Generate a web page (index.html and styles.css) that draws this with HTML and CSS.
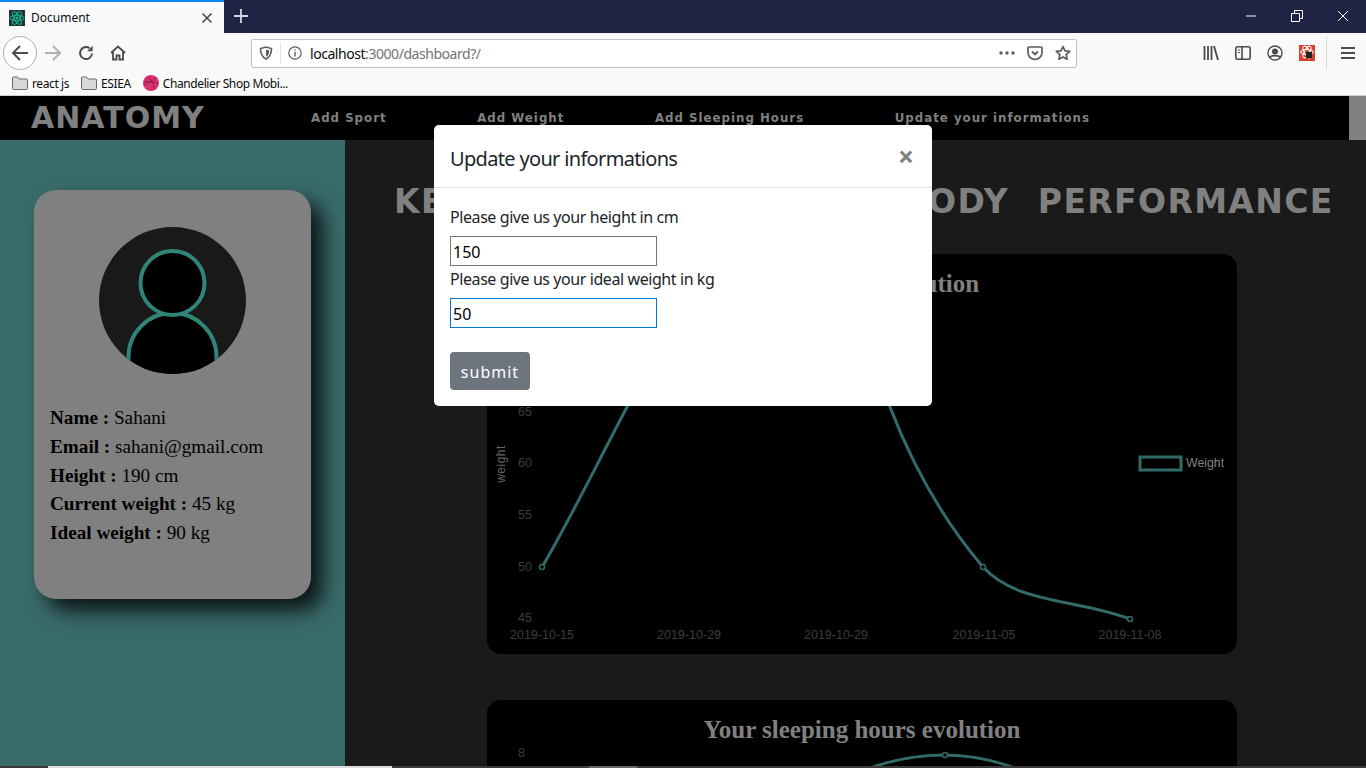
FILE: index.html
```html
<!DOCTYPE html>
<html lang="en">
<head>
  <meta charset="UTF-8">
  <meta name="viewport" content="width=device-width, initial-scale=1.0">
  <title>Document</title>
  <link rel="stylesheet" href="styles.css">
</head>
<body>
  <!-- browser window chrome -->
  <div class="tabbar">
    <div class="tab">
      <svg class="favicon" width="16" height="16" viewBox="0 0 16 16">
        <rect width="16" height="16" fill="#20333a"/>
        <g fill="none" stroke="#1fb58f" stroke-width="1">
          <ellipse cx="8" cy="8" rx="7" ry="2.8"/>
          <ellipse cx="8" cy="8" rx="7" ry="2.8" transform="rotate(60 8 8)"/>
          <ellipse cx="8" cy="8" rx="7" ry="2.8" transform="rotate(120 8 8)"/>
        </g>
        <circle cx="8" cy="8" r="1.6" fill="#1fb58f"/>
      </svg>
      <span class="tab-title">Document</span>
      <svg class="tab-close" width="12" height="12" viewBox="0 0 12 12">
        <path d="M1.5 1.5l9 9M10.5 1.5l-9 9" stroke="#4a4a4f" stroke-width="1.6"/>
      </svg>
    </div>
    <svg class="newtab" width="14" height="14" viewBox="0 0 14 14">
      <path d="M7 0v14M0 7h14" stroke="#d7d8e0" stroke-width="1.8"/>
    </svg>
    <div class="window-controls">
      <svg width="12" height="12" viewBox="0 0 12 12"><path d="M1 6h10" stroke="#fff" stroke-width="1"/></svg>
      <svg width="12" height="12" viewBox="0 0 12 12"><path d="M.5 3.5h8v8h-8zM3.5 3.5v-3h8v8h-3" fill="none" stroke="#fff" stroke-width="1"/></svg>
      <svg width="12" height="12" viewBox="0 0 12 12"><path d="M1 1l10 10M11 1L1 11" stroke="#fff" stroke-width="1"/></svg>
    </div>
  </div>

  <div class="toolbar">
    <div class="nav-buttons">
      <span class="back-btn">
        <svg width="18" height="16" viewBox="0 0 18 16"><path d="M9 1L2 8l7 7M2 8h15" fill="none" stroke="#4a4a4f" stroke-width="2"/></svg>
      </span>
      <svg width="18" height="16" viewBox="0 0 18 16"><path d="M9 1l7 7-7 7M16 8H1" fill="none" stroke="#b1b1b3" stroke-width="2"/></svg>
      <svg width="16" height="16" viewBox="0 0 16 16"><path d="M14 8.500A6 6 0 1 1 11.500 3.200" fill="none" stroke="#4a4a4f" stroke-width="2"/><path d="M14.600 .8v5.400H9.200z" fill="#4a4a4f"/></svg>
      <svg width="16" height="16" viewBox="0 0 16 16"><path d="M1 8l7-6.500L15 8M3 7v7.500h3.500v-4h3v4H13V7" fill="none" stroke="#4a4a4f" stroke-width="1.800"/></svg>
    </div>
    <div class="urlbar">
      <svg class="url-shield" width="14" height="14" viewBox="0 0 14 14"><path d="M7 1l5.500 1.500c0 5-1.500 8.500-5.500 10.500C3 11 1.500 7.500 1.500 2.500z" fill="none" stroke="#5b5b60" stroke-width="1.600"/><path d="M7 3.500l3.200 .9c0 3-.9 5-3.200 6.300z" fill="#5b5b60"/></svg>
      <span class="url-sep"></span>
      <svg class="url-info" width="14" height="14" viewBox="0 0 14 14"><circle cx="7" cy="7" r="6.200" fill="none" stroke="#5b5b60" stroke-width="1.200"/><path d="M7 6v4.500M7 3.500v1.300" stroke="#5b5b60" stroke-width="1.400"/></svg>
      <span class="url-text">localhost<span class="url-muted">:3000/dashboard?/</span></span>
      <div class="url-actions">
        <svg width="16" height="4" viewBox="0 0 16 4"><g fill="#5b5b60"><circle cx="2" cy="2" r="1.700"/><circle cx="8" cy="2" r="1.700"/><circle cx="14" cy="2" r="1.700"/></g></svg>
        <svg width="16" height="15" viewBox="0 0 16 15"><path d="M2 1h12a1 1 0 0 1 1 1v4.500a7 7 0 0 1-14 0V2a1 1 0 0 1 1-1z" fill="none" stroke="#5b5b60" stroke-width="1.700"/><path d="M5 5.500L8 8.500l3-3" fill="none" stroke="#5b5b60" stroke-width="1.900"/></svg>
        <svg width="16" height="16" viewBox="0 0 16 16"><path d="M8 1.500l2 4.300 4.700 .6-3.500 3.200 .9 4.700L8 12l-4.100 2.300 .9-4.700L1.300 6.400 6 5.800z" fill="none" stroke="#5b5b60" stroke-width="1.700" stroke-linejoin="round"/></svg>
      </div>
    </div>
    <div class="tool-icons">
      <svg width="16" height="16" viewBox="0 0 16 16"><path d="M1.500 1v14M5 1v14M8.500 1v14M11 1l4 14" stroke="#4a4a4f" stroke-width="1.800"/></svg>
      <svg width="16" height="14" viewBox="0 0 16 14"><rect x=".8" y=".8" width="14.400" height="12.400" rx="2" fill="none" stroke="#4a4a4f" stroke-width="1.600"/><path d="M7 1v12" stroke="#4a4a4f" stroke-width="1.600"/><path d="M3 4h2M3 6.500h2" stroke="#4a4a4f" stroke-width="1.200"/></svg>
      <svg width="16" height="16" viewBox="0 0 16 16"><circle cx="8" cy="8" r="7" fill="none" stroke="#4a4a4f" stroke-width="1.400"/><circle cx="8" cy="6.500" r="3" fill="#4a4a4f"/><path d="M3 12.500c1-2.500 9-2.500 10 0" fill="none" stroke="#4a4a4f" stroke-width="1.600"/></svg>
      <svg width="16" height="16" viewBox="0 0 16 16">
        <rect width="16" height="16" fill="#d8412f"/>
        <g fill="none" stroke="#fff" stroke-width="1">
          <ellipse cx="8" cy="7" rx="6.500" ry="2.600"/>
          <ellipse cx="8" cy="7" rx="6.500" ry="2.600" transform="rotate(60 8 7)"/>
          <ellipse cx="8" cy="7" rx="6.500" ry="2.600" transform="rotate(120 8 7)"/>
        </g>
        <rect x="7" y="7" width="6" height="6" fill="#222"/>
      </svg>
      <span class="tool-sep"></span>
      <svg width="14" height="12" viewBox="0 0 14 12"><path d="M0 1h14M0 6h14M0 11h14" stroke="#4a4a4f" stroke-width="2"/></svg>
    </div>
  </div>

  <div class="bookmarks">
    <span class="bookmark">
      <svg width="16" height="14" viewBox="0 0 16 14"><path d="M.5 12.500V2a1 1 0 0 1 1-1h4l1.500 2h7.500a1 1 0 0 1 1 1v8.500a1 1 0 0 1-1 1h-13a1 1 0 0 1-1-1z" fill="#d8d8d8" stroke="#6a6a6a"/></svg>
      react js
    </span>
    <span class="bookmark">
      <svg width="16" height="14" viewBox="0 0 16 14"><path d="M.5 12.500V2a1 1 0 0 1 1-1h4l1.500 2h7.500a1 1 0 0 1 1 1v8.500a1 1 0 0 1-1 1h-13a1 1 0 0 1-1-1z" fill="#d8d8d8" stroke="#6a6a6a"/></svg>
      ESIEA
    </span>
    <span class="bookmark">
      <svg width="16" height="16" viewBox="0 0 16 16"><circle cx="8" cy="8" r="8" fill="#d9326f"/><path d="M5 1.500c3 3 6 7.500 6.500 13M1 6.500c5 .5 9-.5 12.500-4M.8 10c4-3.500 9-3.500 14.500-1.500" fill="none" stroke="#8f1a47" stroke-width=".9"/></svg>
      Chandelier Shop Mobi...
    </span>
  </div>

  <!-- page -->
  <div class="page">
    <nav class="topnav">
      <span class="logo">ANATOMY</span>
      <div class="topnav-links">
        <a>Add Sport</a>
        <a>Add Weight</a>
        <a>Add Sleeping Hours</a>
        <a>Update your informations</a>
      </div>
      <span class="scroll-thumb"></span>
    </nav>

    <div class="content">
      <aside class="sidebar">
        <div class="profile-card">
          <svg class="avatar" width="147" height="147" viewBox="0 0 147 147">
            <defs><clipPath id="avatarClip"><circle cx="73.500" cy="73.500" r="73.500"/></clipPath></defs>
            <g clip-path="url(#avatarClip)">
              <rect width="147" height="147" fill="#191919"/>
              <circle cx="73.500" cy="130" r="44" fill="#000" stroke="#2f8577" stroke-width="4"/>
              <circle cx="73.500" cy="56" r="32" fill="#000" stroke="#2f8577" stroke-width="4"/>
            </g>
          </svg>
          <div class="profile-info">
            <p><b>Name :</b> Sahani</p>
            <p><b>Email :</b> sahani@gmail.com</p>
            <p><b>Height :</b> 190 cm</p>
            <p><b>Current weight :</b> 45 kg</p>
            <p><b>Ideal weight :</b> 90 kg</p>
          </div>
        </div>
      </aside>

      <main class="main">
        <h1 class="main-title">KEEP TRACK OF YOUR BODY PERFORMANCE</h1>

        <div class="chart-card">
          <svg width="750" height="400" viewBox="0 0 750 400">
            <text class="chart-title" x="375" y="38">Your weight evolution</text>
            <text class="tick" x="45" y="162" text-anchor="end">65</text>
            <text class="tick" x="45" y="213" text-anchor="end">60</text>
            <text class="tick" x="45" y="265" text-anchor="end">55</text>
            <text class="tick" x="45" y="317" text-anchor="end">50</text>
            <text class="tick" x="45" y="368" text-anchor="end">45</text>
            <text class="tick" x="55" y="385" text-anchor="middle">2019-10-15</text>
            <text class="tick" x="202" y="385" text-anchor="middle">2019-10-29</text>
            <text class="tick" x="349" y="385" text-anchor="middle">2019-10-29</text>
            <text class="tick" x="497" y="385" text-anchor="middle">2019-11-05</text>
            <text class="tick" x="643" y="385" text-anchor="middle">2019-11-08</text>
            <text class="axis-label" transform="translate(18 210) rotate(-90)" text-anchor="middle">weight</text>
            <path class="line" d="M55 313C78 275 110 210 140 153C170 95 190 60 210 60L340 60C365 60 385 105 403 153C425 210 455 265 496 313C530 350 590 345 643 365"/>
            <circle class="point" cx="55" cy="313" r="2.500"/>
            <circle class="point" cx="496" cy="313" r="2.500"/>
            <circle class="point" cx="643" cy="365" r="2.500"/>
            <rect class="legend-box" x="653" y="203" width="41" height="13"/>
            <text class="legend-text" x="699" y="213">Weight</text>
          </svg>
        </div>

        <div class="chart-card">
          <svg width="750" height="100" viewBox="0 0 750 100">
            <text class="chart-title" x="375" y="38">Your sleeping hours evolution</text>
            <text class="tick" x="38" y="57" text-anchor="end">8</text>
            <path class="line" d="M372 72Q458 38 538 72"/>
            <circle class="point" cx="458" cy="55" r="2.500"/>
          </svg>
        </div>
      </main>
    </div>

    <div class="hscroll">
      <span class="hscroll-light"></span>
      <span class="hscroll-thumb"></span>
    </div>
  </div>

  <!-- modal -->
  <div class="modal">
    <div class="modal-header">
      <h5 class="modal-title">Update your informations</h5>
      <span class="modal-close">&times;</span>
    </div>
    <form class="modal-body">
      <label for="height">Please give us your height in cm</label>
      <input id="height" type="text" value="150">
      <label for="ideal">Please give us your ideal weight in kg</label>
      <input id="ideal" class="focused" type="text" value="50">
      <button type="button" class="submit-btn">submit</button>
    </form>
  </div>
</body>
</html>
```

FILE: styles.css
```css
* {
  box-sizing: border-box;
}
html, body {
  height: 100%;
}
body {
  margin: 0;
  overflow: hidden;
  font-family: "Noto Sans", "Open Sans", sans-serif;
  background-color: #1a1a1a;
}

/* browser chrome */
.tabbar {
  display: flex;
  align-items: center;
  height: 33px;
  background-color: #1f2344;
}
.tab {
  display: flex;
  align-items: center;
  width: 224px;
  height: 33px;
  padding: 0 11px 0 9px;
  background-color: #f9f9fa;
  border-top: 2px solid #0a84ff;
}
.favicon {
  margin-right: 6px;
}
.tab-title {
  flex: 1;
  font-size: 12px;
  color: #0c0c0d;
}
.newtab {
  margin: -1px 0 0 10px;
}
.window-controls {
  display: flex;
  gap: 34px;
  margin: -1px 17px 0 auto;
}
.toolbar {
  display: flex;
  align-items: center;
  height: 38px;
  padding-top: 2px;
  background-color: #f9f9fa;
}
.nav-buttons {
  display: flex;
  align-items: center;
  gap: 16px;
  width: 251px;
  padding-left: 3px;
}
.back-btn {
  display: flex;
  align-items: center;
  justify-content: center;
  width: 34px;
  height: 34px;
  margin-right: -9px;
  background-color: #fff;
  border: 1px solid #b1b1b3;
  border-radius: 50%;
}
.urlbar {
  display: flex;
  align-items: center;
  width: 826px;
  height: 29px;
  background-color: #fff;
  border: 1px solid #c0c0c0;
  border-radius: 2px;
}
.url-shield {
  margin-left: 7px;
}
.url-sep {
  width: 1px;
  height: 22px;
  margin: 0 7px;
  background-color: #e4e4e4;
}
.url-text {
  margin-left: 8px;
  font-size: 14px;
  letter-spacing: -0.45px;
  color: #0c0c0d;
}
.url-muted {
  color: #737373;
}
.url-actions {
  display: flex;
  align-items: center;
  gap: 12px;
  margin-left: auto;
  margin-right: 5px;
}
.tool-icons {
  display: flex;
  align-items: center;
  gap: 16px;
  margin-left: 126px;
}
.tool-sep {
  width: 1px;
  height: 34px;
  margin: 0 -2px 0 -5px;
  background-color: #dcdcdc;
}
.bookmarks {
  display: flex;
  align-items: center;
  gap: 12px;
  height: 25px;
  padding-left: 12px;
  background-color: #f9f9fa;
  border-bottom: 1px solid #cfcfcf;
}
.bookmark {
  display: flex;
  align-items: center;
  gap: 4px;
  font-size: 12px;
  letter-spacing: -0.4px;
  color: #0c0c0d;
}

/* page */
.page {
  display: flex;
  flex-direction: column;
  height: 672px;
}
.topnav {
  display: flex;
  align-items: center;
  height: 44px;
  flex-shrink: 0;
  padding-left: 31px;
  background-color: #000;
}
.logo {
  width: 280px;
  font-family: "DejaVu Sans", sans-serif;
  font-weight: bold;
  font-size: 30px;
  line-height: 40px;
  letter-spacing: 1px;
  color: #808080;
}
.topnav-links {
  display: flex;
  gap: 90.500px;
  flex: 1;
  margin-top: -1px;
  font-family: "DejaVu Sans", sans-serif;
  font-weight: bold;
  font-size: 11.800px;
  letter-spacing: 1px;
  color: #808080;
}
.scroll-thumb {
  width: 17px;
  height: 44px;
  background-color: #808080;
}
.content {
  display: flex;
  flex: 1;
  min-height: 0;
}
.sidebar {
  width: 345px;
  padding: 50px 0 0 34px;
  background-color: #3a6b6b;
}
.profile-card {
  width: 277px;
  height: 409px;
  padding-top: 37px;
  background-color: #808080;
  border-radius: 22px;
  box-shadow: 12px 12px 20px rgba(0, 0, 0, 0.8);
}
.avatar {
  display: block;
  margin: 0 auto;
}
.profile-info {
  padding: 30px 0 0 16px;
  font-family: "Liberation Serif", serif;
  font-size: 19.200px;
  color: #000;
}
.profile-info p {
  margin: 0;
  line-height: 28.800px;
}
.main {
  flex: 1;
  min-width: 0;
  overflow: hidden;
}
.main-title {
  margin: 38px 0 29px 49px;
  font-family: "DejaVu Sans", sans-serif;
  font-weight: bold;
  font-size: 33px;
  line-height: 47px;
  letter-spacing: 1.360px;
  word-spacing: 16px;
  white-space: nowrap;
  color: #808080;
}
.chart-card {
  width: 750px;
  margin: 0 0 46px 142px;
  background-color: #000;
  border-radius: 14px;
  overflow: hidden;
}
.chart-card svg {
  display: block;
}
.chart-title {
  font-family: "Liberation Serif", serif;
  font-weight: bold;
  font-size: 25px;
  fill: #808080;
  text-anchor: middle;
}
.tick {
  font-family: "Liberation Sans", sans-serif;
  font-size: 12.500px;
  fill: #3d3d3d;
}
.axis-label {
  font-family: "Liberation Sans", sans-serif;
  font-size: 12px;
  letter-spacing: 0.500px;
  fill: #666;
}
.line {
  fill: none;
  stroke: #336b6b;
  stroke-width: 3;
}
.point {
  fill: #000;
  stroke: #336b6b;
  stroke-width: 1.500;
}
.legend-box {
  fill: none;
  stroke: #336b6b;
  stroke-width: 3;
}
.legend-text {
  font-family: "Liberation Sans", sans-serif;
  font-size: 12.300px;
  fill: #808080;
}
.hscroll {
  display: flex;
  flex-shrink: 0;
  height: 2px;
  padding-left: 48px;
  background-color: #3a3a3a;
}
.hscroll-light {
  width: 344px;
  background-color: #dcdcdc;
}
.hscroll-thumb {
  width: 48px;
  margin-left: 197px;
  background-color: #6b6b6b;
}

/* modal */
.modal {
  position: absolute;
  top: 125px;
  left: 434px;
  width: 498px;
  height: 281px;
  background-color: #fff;
  border-radius: 5px;
  color: #212529;
}
.modal-header {
  display: flex;
  align-items: flex-start;
  justify-content: space-between;
  height: 63px;
  padding: 16px;
  border-bottom: 1px solid #dee2e6;
}
.modal-title {
  margin: 0;
  font-size: 20px;
  font-weight: normal;
  line-height: 36px;
  letter-spacing: -0.67px;
}
.modal-close {
  margin-top: -3px;
  margin-right: 2px;
  font-size: 28px;
  font-weight: bold;
  line-height: 36px;
  color: #7f7f7f;
}
.modal-body {
  padding: 16px;
}
.modal-body label {
  display: block;
  height: 24px;
  margin-bottom: 8px;
  font-size: 16px;
  line-height: 27px;
  letter-spacing: -0.42px;
}
.modal-body input {
  display: block;
  width: 207px;
  height: 30px;
  padding: 3px 2px 1px;
  font-family: "Noto Sans", sans-serif;
  font-size: 16px;
  color: #000;
  border: 1px solid #767676;
  outline: none;
}
.modal-body input.focused {
  border-color: #0078d7;
}
.submit-btn {
  display: block;
  width: 80px;
  height: 38px;
  margin-top: 24px;
  padding: 2px 0 0;
  font-family: "Noto Sans", sans-serif;
  font-size: 16px;
  letter-spacing: 1px;
  color: #fff;
  background-color: #6c757d;
  border: none;
  border-radius: 4px;
}
```
